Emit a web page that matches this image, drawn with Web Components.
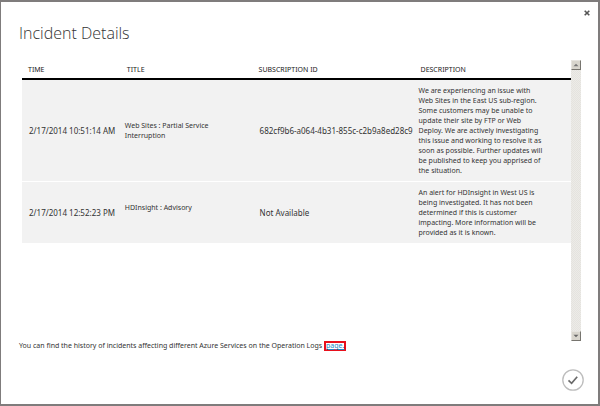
<!DOCTYPE html>
<html lang="en">
<head>
<meta charset="utf-8">
<title>Incident Details</title>
<style>
html, body { height: 100%; margin: 0; }
body { font: 7px/10px "Noto Sans", "Open Sans", sans-serif; color: #333; background: #fff; }
</style>
</head>
<body>
<incident-dialog>
  <span slot="title">Incident Details</span>
  <scroll-pane><incident-table></incident-table></scroll-pane>
  <log-note slot="note"></log-note>
</incident-dialog>

<script>
class IncidentDialog extends HTMLElement {
  constructor() {
    super();
    this.attachShadow({ mode: "open" }).innerHTML = `
<style>
:host { display: flex; flex-direction: column; box-sizing: border-box; min-height: 100%; border: 2px solid #7f7c7c; border-left-width: 1px; padding: 7px 7px 13px 18px; background: #fff; }
button { display: block; border: 0; padding: 0; margin: 0; background: none; cursor: pointer; }
svg { display: block; }
.close { align-self: flex-end; width: 8px; height: 8px; }
h1 { margin: 3px 0 14px; font-family: "Open Sans", sans-serif; font-size: 16px; line-height: 26px; font-weight: 300; color: #333; }
.body { display: flex; flex: 1; padding: 0 10px 0 3px; }
.accept { align-self: flex-end; margin: 18px 7px 0 0; }
</style>
<button class="close" aria-label="Close"><svg width="8" height="8" viewBox="0 0 8 8"><path d="M1.7 1.7 6.3 6.3M6.3 1.7 1.7 6.3" stroke="#555" stroke-width="1.6"/></svg></button>
<h1><slot name="title"></slot></h1>
<div class="body"><slot></slot></div>
<slot name="note"></slot>
<button class="accept" aria-label="Accept"><svg width="22" height="22" viewBox="0 0 22 22" fill="none"><circle cx="11" cy="11" r="10.2" stroke="#bdbdbd" stroke-width="1.3"/><path d="M6.5 11.4 9.6 14.3 15.2 7.8" stroke="#6a6a6a" stroke-width="1.7"/></svg></button>`;
  }
}
customElements.define("incident-dialog", IncidentDialog);

class ScrollPane extends HTMLElement {
  constructor() {
    super();
    this.attachShadow({ mode: "open" }).innerHTML = `
<style>
:host { display: flex; flex: 1; min-width: 0; }
.content { flex: 1; min-width: 0; }
.bar { display: flex; flex-direction: column; justify-content: space-between; width: 10px; background: repeating-conic-gradient(#e5e3de 0 25%, #ecebe8 0 50%) 0 0 / 2px 2px; }
button { display: block; box-sizing: border-box; width: 10px; height: 10px; margin: 0; padding: 0; background: #d8d5cd; border: 1px solid; border-color: #e6e4df #77756f #77756f #e6e4df; }
svg { display: block; }
</style>
<div class="content"><slot></slot></div>
<div class="bar">
<button aria-label="Scroll up"><svg width="8" height="8" viewBox="0 0 8 8"><path d="M1.5 5.2 4 2.8 6.5 5.2Z" fill="#777"/></svg></button>
<button aria-label="Scroll down"><svg width="8" height="8" viewBox="0 0 8 8"><path d="M1.5 2.8 4 5.2 6.5 2.8Z" fill="#666"/></svg></button>
</div>`;
  }
}
customElements.define("scroll-pane", ScrollPane);

class IncidentTable extends HTMLElement {
  constructor() {
    super();
    this.attachShadow({ mode: "open" }).innerHTML = `
<style>
:host { display: block; }
table { width: 100%; border-collapse: separate; border-spacing: 0; table-layout: fixed; }
.time { width: 18%; } .name { width: 24%; } .sub { width: 29.5%; }
th { height: 16px; padding: 2px 0 0 6px; border-bottom: 2px solid #000; text-align: left; font-weight: 400; color: #222; }
td { padding: 6px 0 5px 7px; background: #f2f2f2; vertical-align: middle; }
tr + tr td { border-top: 1px solid #fff; }
td:nth-child(odd) { font-size: 8px; white-space: nowrap; }
td:nth-child(2) { padding-left: 4px; }
td:nth-child(4) { padding-left: 4px; }
td p { margin: 0; min-height: 20px; }
</style>
<table>
<colgroup><col class="time"><col class="name"><col class="sub"><col></colgroup>
<thead><tr><th>TIME</th><th>TITLE</th><th>SUBSCRIPTION ID</th><th>DESCRIPTION</th></tr></thead>
<tbody>
<tr><td>2/17/2014 10:51:14 AM</td><td><p>Web Sites : Partial Service<br>Interruption</p></td><td>682cf9b6-a064-4b31-855c-c2b9a8ed28c9</td><td>We are experiencing an issue with<br>Web Sites in the East US sub-region.<br>Some customers may be unable to<br>update their site by FTP or Web<br>Deploy. We are actively investigating<br>this issue and working to resolve it as<br>soon as possible. Further updates will<br>be published to keep you apprised of<br>the situation.</td></tr>
<tr><td>2/17/2014 12:52:23 PM</td><td><p>HDInsight : Advisory</p></td><td>Not Available</td><td>An alert for HDInsight in West US is<br>being investigated. It has not been<br>determined if this is customer<br>impacting. More information will be<br>provided as it is known.</td></tr>
</tbody>
</table>`;
  }
}
customElements.define("incident-table", IncidentTable);

class LogNote extends HTMLElement {
  constructor() {
    super();
    this.attachShadow({ mode: "open" }).innerHTML = `
<style>
:host { display: block; }
p { margin: 0; }
a { display: inline-block; border: 2px solid #e8101c; line-height: 6px; color: #1b87c9; text-decoration: underline; }
</style>
<p>You can find the history of incidents affecting different Azure Services on the Operation Logs <a href="#logs">page.</a></p>`;
  }
}
customElements.define("log-note", LogNote);
</script>
</body>
</html>
